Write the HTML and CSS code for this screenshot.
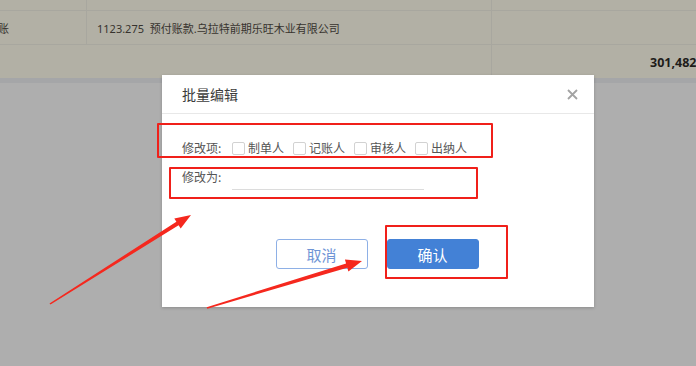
FILE: index.html
```html
<!DOCTYPE html>
<html lang="zh-CN">
<head>
  <meta charset="UTF-8"/>
  <meta name="viewport" content="width=device-width, initial-scale=1.0"/>
  <title>批量编辑</title>
  <link rel="stylesheet" href="styles.css">
</head>
<body>

  <div class="voucher-table">
    <div class="row row-top">
      <div class="cell cell-a"></div>
      <div class="cell cell-b"></div>
      <div class="cell cell-c"></div>
    </div>
    <div class="row">
      <div class="cell cell-a"><span class="cut-text">日记账</span></div>
      <div class="cell cell-b">1123.275&nbsp; 预付账款.乌拉特前期乐旺木业有限公司</div>
      <div class="cell cell-c"></div>
    </div>
    <div class="row row-total">
      <div class="cell cell-ab"></div>
      <div class="cell cell-c total">301,482.00</div>
    </div>
  </div>
  <div class="table-foot"></div>

  <div class="dialog">
    <div class="dialog-header">
      <span class="dialog-title">批量编辑</span>
      <svg class="dialog-close" width="11" height="11" viewBox="0 0 11 11">
        <path d="M1 1 L10 10 M10 1 L1 10" stroke="#a3a3a3" stroke-width="1.8"/>
      </svg>
    </div>
    <div class="dialog-body">
      <div class="form-row">
        <span class="form-label">修改项:</span>
        <label class="check"><span class="check-box"></span>制单人</label>
        <label class="check"><span class="check-box"></span>记账人</label>
        <label class="check"><span class="check-box"></span>审核人</label>
        <label class="check"><span class="check-box"></span>出纳人</label>
      </div>
      <div class="form-row form-row-input">
        <span class="form-label">修改为:</span>
        <div class="line-input"></div>
      </div>
      <div class="dialog-actions">
        <button class="btn btn-cancel">取消</button>
        <button class="btn btn-ok">确认</button>
      </div>
    </div>
  </div>

  <!-- annotations -->
  <div class="mark mark-items"></div>
  <div class="mark mark-value"></div>
  <div class="mark mark-ok"></div>
  <svg class="arrows" width="696" height="366" viewBox="0 0 696 366">
    <polygon fill="#f5281e" points="49.5,303.4 176.4,221.8 174.3,218.4 191,215 180.7,228.6 178.6,225.2 50.5,304.6"/>
    <polygon fill="#f5281e" points="206.7,307.2 346.1,263.4 344.9,259.6 362,261 348.4,271.6 347.3,267.8 207.3,308.8"/>
  </svg>

</body>
</html>
```

FILE: styles.css
```css
body {
  margin: 0;
  background: #aeaeae;
  font-family: "Noto Sans", "Noto Sans CJK SC", sans-serif;
  width: 696px;
  height: 366px;
  overflow: hidden;
  position: relative;
}

.voucher-table {
  background: #b2b0a5;
  color: #37332e;
  font-size: 11px;
}

.row {
  display: grid;
  grid-template-columns: 87px 405px 1fr;
  height: 33px;
  border-bottom: 1px solid #a8a79f;
}

.row-top {
  height: 10px;
}

.row-total {
  grid-template-columns: 492px 1fr;
  height: 33px;
  border-bottom: none;
}

.cell {
  display: flex;
  align-items: center;
  white-space: nowrap;
  overflow: hidden;
}

.cell-a,
.cell-b,
.cell-ab {
  border-right: 1px solid #a8a79f;
}

.cell-b {
  padding-left: 10px;
}

.cut-text {
  margin-left: -24px;
}

.total {
  padding-left: 158px;
  padding-top: 2px;
  font-weight: 700;
  font-size: 12.5px;
  color: #1e1c1a;
  overflow: visible;
}

.table-foot {
  height: 5px;
  background: #a5a6a8;
}

.dialog {
  position: absolute;
  left: 162px;
  top: 75px;
  width: 432px;
  height: 232px;
  background: #fff;
  box-shadow: 0 1px 3px rgba(0, 0, 0, 0.2);
  font-family: "Noto Sans CJK SC", sans-serif;
}

.dialog-header {
  height: 38px;
  border-bottom: 1px solid #e8e8e8;
  display: flex;
  align-items: center;
  justify-content: space-between;
  padding: 0 16px 0 20px;
}

.dialog-title {
  font-size: 14px;
  color: #3c3c3c;
}

.dialog-body {
  padding: 0 20px;
}

.form-row {
  display: flex;
  align-items: center;
  height: 20px;
  font-size: 12px;
  color: #555;
}

.form-row:first-child {
  margin-top: 24px;
}

.form-row-input {
  margin-top: 9px;
  align-items: flex-start;
  height: 23px;
}

.form-label {
  width: 50px;
  line-height: 20px;
}

.check {
  display: flex;
  align-items: center;
  margin-right: 9px;
  line-height: 20px;
}

.check-box {
  width: 11px;
  height: 11px;
  border: 1px solid #d2d2d2;
  border-radius: 2px;
  margin-right: 3px;
}

.line-input {
  width: 192px;
  height: 22px;
  border-bottom: 1px solid #dcdcdc;
}

.dialog-actions {
  display: flex;
  justify-content: center;
  gap: 19px;
  margin-top: 49px;
  margin-left: -2px;
}

.btn {
  width: 92px;
  height: 30px;
  border-radius: 3px;
  font-family: "Noto Sans CJK SC", sans-serif;
  font-size: 15px;
  padding: 0;
}

.btn-cancel {
  background: #fff;
  border: 1px solid #8eb0e6;
  color: #6f95d6;
}

.btn-ok {
  background: #4381d6;
  border: 1px solid #4381d6;
  color: #fff;
}

.mark {
  position: absolute;
  border: 2px solid #f0201a;
  border-radius: 1px;
}

.mark-items {
  left: 157px;
  top: 123px;
  width: 332px;
  height: 31px;
}

.mark-value {
  left: 169px;
  top: 167px;
  width: 305px;
  height: 28px;
}

.mark-ok {
  left: 385px;
  top: 225px;
  width: 119px;
  height: 50px;
}

.arrows {
  position: absolute;
  left: 0;
  top: 0;
}
```
